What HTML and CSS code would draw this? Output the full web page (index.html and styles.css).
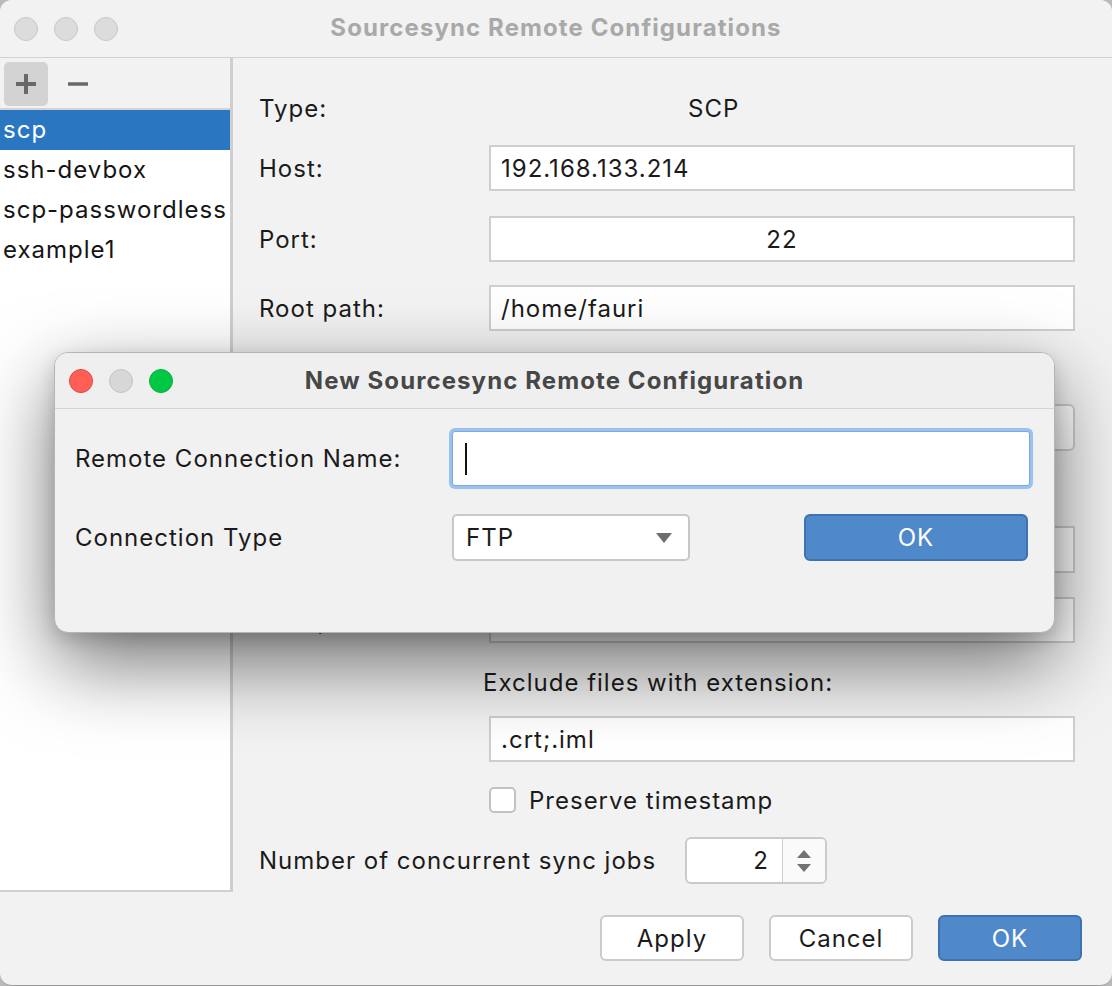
FILE: index.html
```html
<!DOCTYPE html>
<html lang="en">
<head>
<meta charset="utf-8">
<title>Sourcesync Remote Configurations</title>
<link rel="stylesheet" href="styles.css">
</head>
<body>
<div class="window">
  <div class="titlebar">
    <div class="lights">
      <span class="light inactive"></span>
      <span class="light inactive"></span>
      <span class="light inactive"></span>
    </div>
    <div class="title">Sourcesync Remote Configurations</div>
    <div></div>
  </div>

  <div class="main">
    <aside class="sidebar">
      <div class="toolbar">
        <button class="tool-btn pressed" aria-label="Add">
          <svg width="24" height="24" viewBox="0 0 24 24"><path d="M12 2v20M2 12h20" stroke="#686868" stroke-width="4"/></svg>
        </button>
        <button class="tool-btn" aria-label="Remove">
          <svg width="24" height="24" viewBox="0 0 24 24"><path d="M2 12h20" stroke="#686868" stroke-width="3.5"/></svg>
        </button>
      </div>
      <ul class="list">
        <li class="selected">scp</li>
        <li>ssh-devbox</li>
        <li>scp-passwordless</li>
        <li>example1</li>
      </ul>
    </aside>

    <section class="form">
      <div class="row r-type">
        <span class="label">Type:</span>
        <span class="type-value">SCP</span>
      </div>
      <div class="row r-host">
        <span class="label">Host:</span>
        <div class="field">192.168.133.214</div>
      </div>
      <div class="row r-port">
        <span class="label">Port:</span>
        <div class="field center">22</div>
      </div>
      <div class="row r-root">
        <span class="label">Root path:</span>
        <div class="field">/home/fauri</div>
      </div>
      <div class="row r-auth">
        <span class="label"></span>
        <div class="field rounded"></div>
      </div>
      <div class="row r-user">
        <span class="label"></span>
        <div class="field"></div>
      </div>
      <div class="row r-excl">
        <span class="label">Passphrase:</span>
        <div class="field"></div>
      </div>
      <div class="row r-extlabel">
        <span class="sublabel">Exclude files with extension:</span>
      </div>
      <div class="row r-ext">
        <span class="label"></span>
        <div class="field">.crt;.iml</div>
      </div>
      <div class="row r-check">
        <span class="label"></span>
        <span class="checkbox"></span>
        <span class="check-text">Preserve timestamp</span>
      </div>
      <div class="row r-jobs">
        <span class="jobs-label">Number of concurrent sync jobs</span>
        <div class="spinner">
          <span class="spin-value">2</span>
          <span class="spin-arrows">
            <svg width="18" height="28" viewBox="0 0 18 28"><path d="M2 11L9 3L16 11Z" fill="#727272"/><path d="M2 17L9 25L16 17Z" fill="#727272"/></svg>
          </span>
        </div>
      </div>
    </section>
  </div>

  <div class="footer">
    <button class="btn">Apply</button>
    <button class="btn">Cancel</button>
    <button class="btn primary">OK</button>
  </div>

  <div class="dialog">
    <div class="dlg-titlebar">
      <div class="lights">
        <span class="light red"></span>
        <span class="light grey"></span>
        <span class="light green"></span>
      </div>
      <div class="dlg-title">New Sourcesync Remote Configuration</div>
      <div></div>
    </div>
    <div class="dlg-body">
      <div class="dlg-row first">
        <span class="dlg-label">Remote Connection Name:</span>
        <div class="focus-input"><span class="caret"></span></div>
      </div>
      <div class="dlg-row second">
        <span class="dlg-label">Connection Type</span>
        <div class="select">
          <span>FTP</span>
          <svg width="16" height="10" viewBox="0 0 16 10"><path d="M0 0H16L8 10Z" fill="#6d6d6d"/></svg>
        </div>
        <button class="btn primary dlg-ok">OK</button>
      </div>
    </div>
  </div>
</div>
</body>
</html>
```

FILE: styles.css
```css
* { box-sizing: border-box; }

html, body {
  margin: 0;
  padding: 0;
  background: #b9b9b9;
}

body {
  font-family: "Inter", "Liberation Sans", sans-serif;
  font-size: 24px;
  letter-spacing: 1px;
  color: #1b1b1b;
}

.window {
  position: relative;
  width: 1112px;
  height: 986px;
  background: #f2f2f2;
  border-radius: 12px;
  overflow: hidden;
  display: flex;
  flex-direction: column;
  border-bottom: 1px solid #9a9a9a;
}

/* title bar */
.titlebar {
  height: 58px;
  flex: none;
  display: grid;
  grid-template-columns: 1fr auto 1fr;
  align-items: center;
  border-bottom: 1px solid #d0d0d0;
  background: #f2f2f2;
}

.lights {
  display: flex;
  gap: 16px;
  padding-left: 14px;
}

.light {
  width: 24px;
  height: 24px;
  border-radius: 50%;
  display: block;
}

.light.inactive {
  background: #dcdcdc;
  border: 1px solid #c9c9c9;
}

.title {
  font-weight: 700;
  font-size: 24px;
  letter-spacing: 1.1px;
  color: #a9a9a9;
  padding-bottom: 2px;
}

/* main */
.main {
  height: 834px;
  flex: none;
  display: flex;
}

.sidebar {
  width: 233px;
  flex: none;
  display: flex;
  flex-direction: column;
  border-right: 3px solid #cfcfcf;
  border-bottom: 2px solid #d0d0d0;
}

.toolbar {
  height: 52px;
  flex: none;
  display: flex;
  align-items: flex-start;
  padding: 4px 0 0 4px;
  gap: 8px;
  border-bottom: 2px solid #d3d3d3;
}

.tool-btn {
  width: 44px;
  height: 44px;
  border: none;
  border-radius: 5px;
  background: transparent;
  display: flex;
  align-items: center;
  justify-content: center;
  padding: 0;
}

.tool-btn.pressed {
  background: #d3d3d3;
}

.list {
  list-style: none;
  margin: 0;
  padding: 0;
  flex: 1;
  background: #ffffff;
}

.list li {
  height: 40px;
  line-height: 40px;
  padding-left: 3px;
  font-size: 24px;
  color: #151515;
  white-space: nowrap;
}

.list li.selected {
  background: #2a76c0;
  color: #ffffff;
}

/* form */
.form {
  flex: 1;
  padding: 30px 37px 0 26px;
  display: flex;
  flex-direction: column;
}

.row {
  display: flex;
  align-items: center;
  flex: none;
}

.label {
  width: 230px;
  flex: none;
}

.field {
  width: 586px;
  height: 46px;
  background: #ffffff;
  border: 2px solid #cecece;
  padding: 0 10px;
  display: flex;
  align-items: center;
}

.field.center { justify-content: center; }
.field.rounded { border-radius: 6px; }

.r-type { height: 40px; }
.type-value { padding-left: 199px; }
.r-host { margin-top: 17px; }
.r-port { margin-top: 25px; }
.r-root { margin-top: 23px; }
.r-auth { margin-top: 73px; }
.r-auth .field { height: 47px; }
.r-user { margin-top: 75px; }
.r-user .field { height: 47px; }
.r-excl { margin-top: 24px; }
.r-extlabel { margin-top: 19px; height: 40px; }
.sublabel { padding-left: 224px; }
.r-ext { margin-top: 14px; }
.r-check { margin-top: 18px; height: 40px; }

.checkbox {
  width: 27px;
  height: 26px;
  border: 2px solid #c2c2c2;
  border-radius: 5px;
  background: #ffffff;
  margin-right: 13px;
}

.r-jobs { margin-top: 17px; }

.jobs-label {
  width: 426px;
  flex: none;
}

.spinner {
  width: 142px;
  height: 47px;
  border: 2px solid #cacaca;
  border-radius: 6px;
  display: flex;
  overflow: hidden;
  background: #ffffff;
}

.spin-value {
  width: 96px;
  border-right: 1px solid #cfcfcf;
  display: flex;
  align-items: center;
  justify-content: flex-end;
  padding-right: 13px;
}

.spin-arrows {
  flex: 1;
  background: #fafafa;
  display: flex;
  align-items: center;
  justify-content: center;
}

/* footer */
.footer {
  flex: 1;
  display: flex;
  justify-content: flex-end;
  align-items: flex-start;
  gap: 25px;
  padding: 23px 30px 0 0;
}

.btn {
  width: 144px;
  height: 46px;
  background: #ffffff;
  border: 2px solid #cbcbcb;
  border-radius: 6px;
  font-family: inherit;
  font-size: 24px;
  letter-spacing: 1px;
  color: #1b1b1b;
  padding: 0;
}

.btn.primary {
  background: #4f89c9;
  border-color: #3d73b2;
  color: #ffffff;
}

/* dialog */
.dialog {
  position: absolute;
  left: 54px;
  top: 352px;
  width: 1001px;
  height: 281px;
  background: #f1f1f1;
  border-radius: 14px;
  border: 1px solid #b5b5b5;
  box-shadow: 0 30px 80px rgba(0, 0, 0, 0.55), 0 6px 18px rgba(0, 0, 0, 0.15);
  overflow: hidden;
}

.dlg-titlebar {
  height: 56px;
  display: grid;
  grid-template-columns: 1fr auto 1fr;
  align-items: center;
  background: #efeff0;
  border-bottom: 1px solid #d5d5d5;
}

.light.red { background: #ff5f57; border: 1px solid #e2463f; }
.light.grey { background: #d7d7d8; border: 1px solid #c4c4c4; }
.light.green { background: #00c845; border: 1px solid #09b03c; }

.dlg-title {
  font-weight: 700;
  font-size: 24px;
  letter-spacing: 1.1px;
  color: #474747;
}

.dlg-body {
  padding: 22px 24px 0 20px;
}

.dlg-row {
  display: flex;
  align-items: center;
}

.dlg-label {
  width: 375px;
  flex: none;
  color: #1b1b1b;
}

.focus-input {
  width: 581px;
  height: 55px;
  background: #ffffff;
  border: 1px solid #7fa9dc;
  box-shadow: 0 0 0 3px #98c2ef;
  border-radius: 3px;
  margin-left: 2px;
  display: flex;
  align-items: center;
  padding-left: 12px;
}

.caret {
  width: 2px;
  height: 32px;
  background: #111;
  display: block;
}

.dlg-row.second {
  margin-top: 28px;
}

.select {
  width: 238px;
  height: 47px;
  margin-left: 2px;
  background: #ffffff;
  border: 2px solid #c8c8c8;
  border-radius: 5px;
  display: flex;
  align-items: center;
  justify-content: space-between;
  padding: 0 16px 0 12px;
}

.dlg-ok {
  width: 224px;
  height: 47px;
  margin-left: 114px;
}
```
